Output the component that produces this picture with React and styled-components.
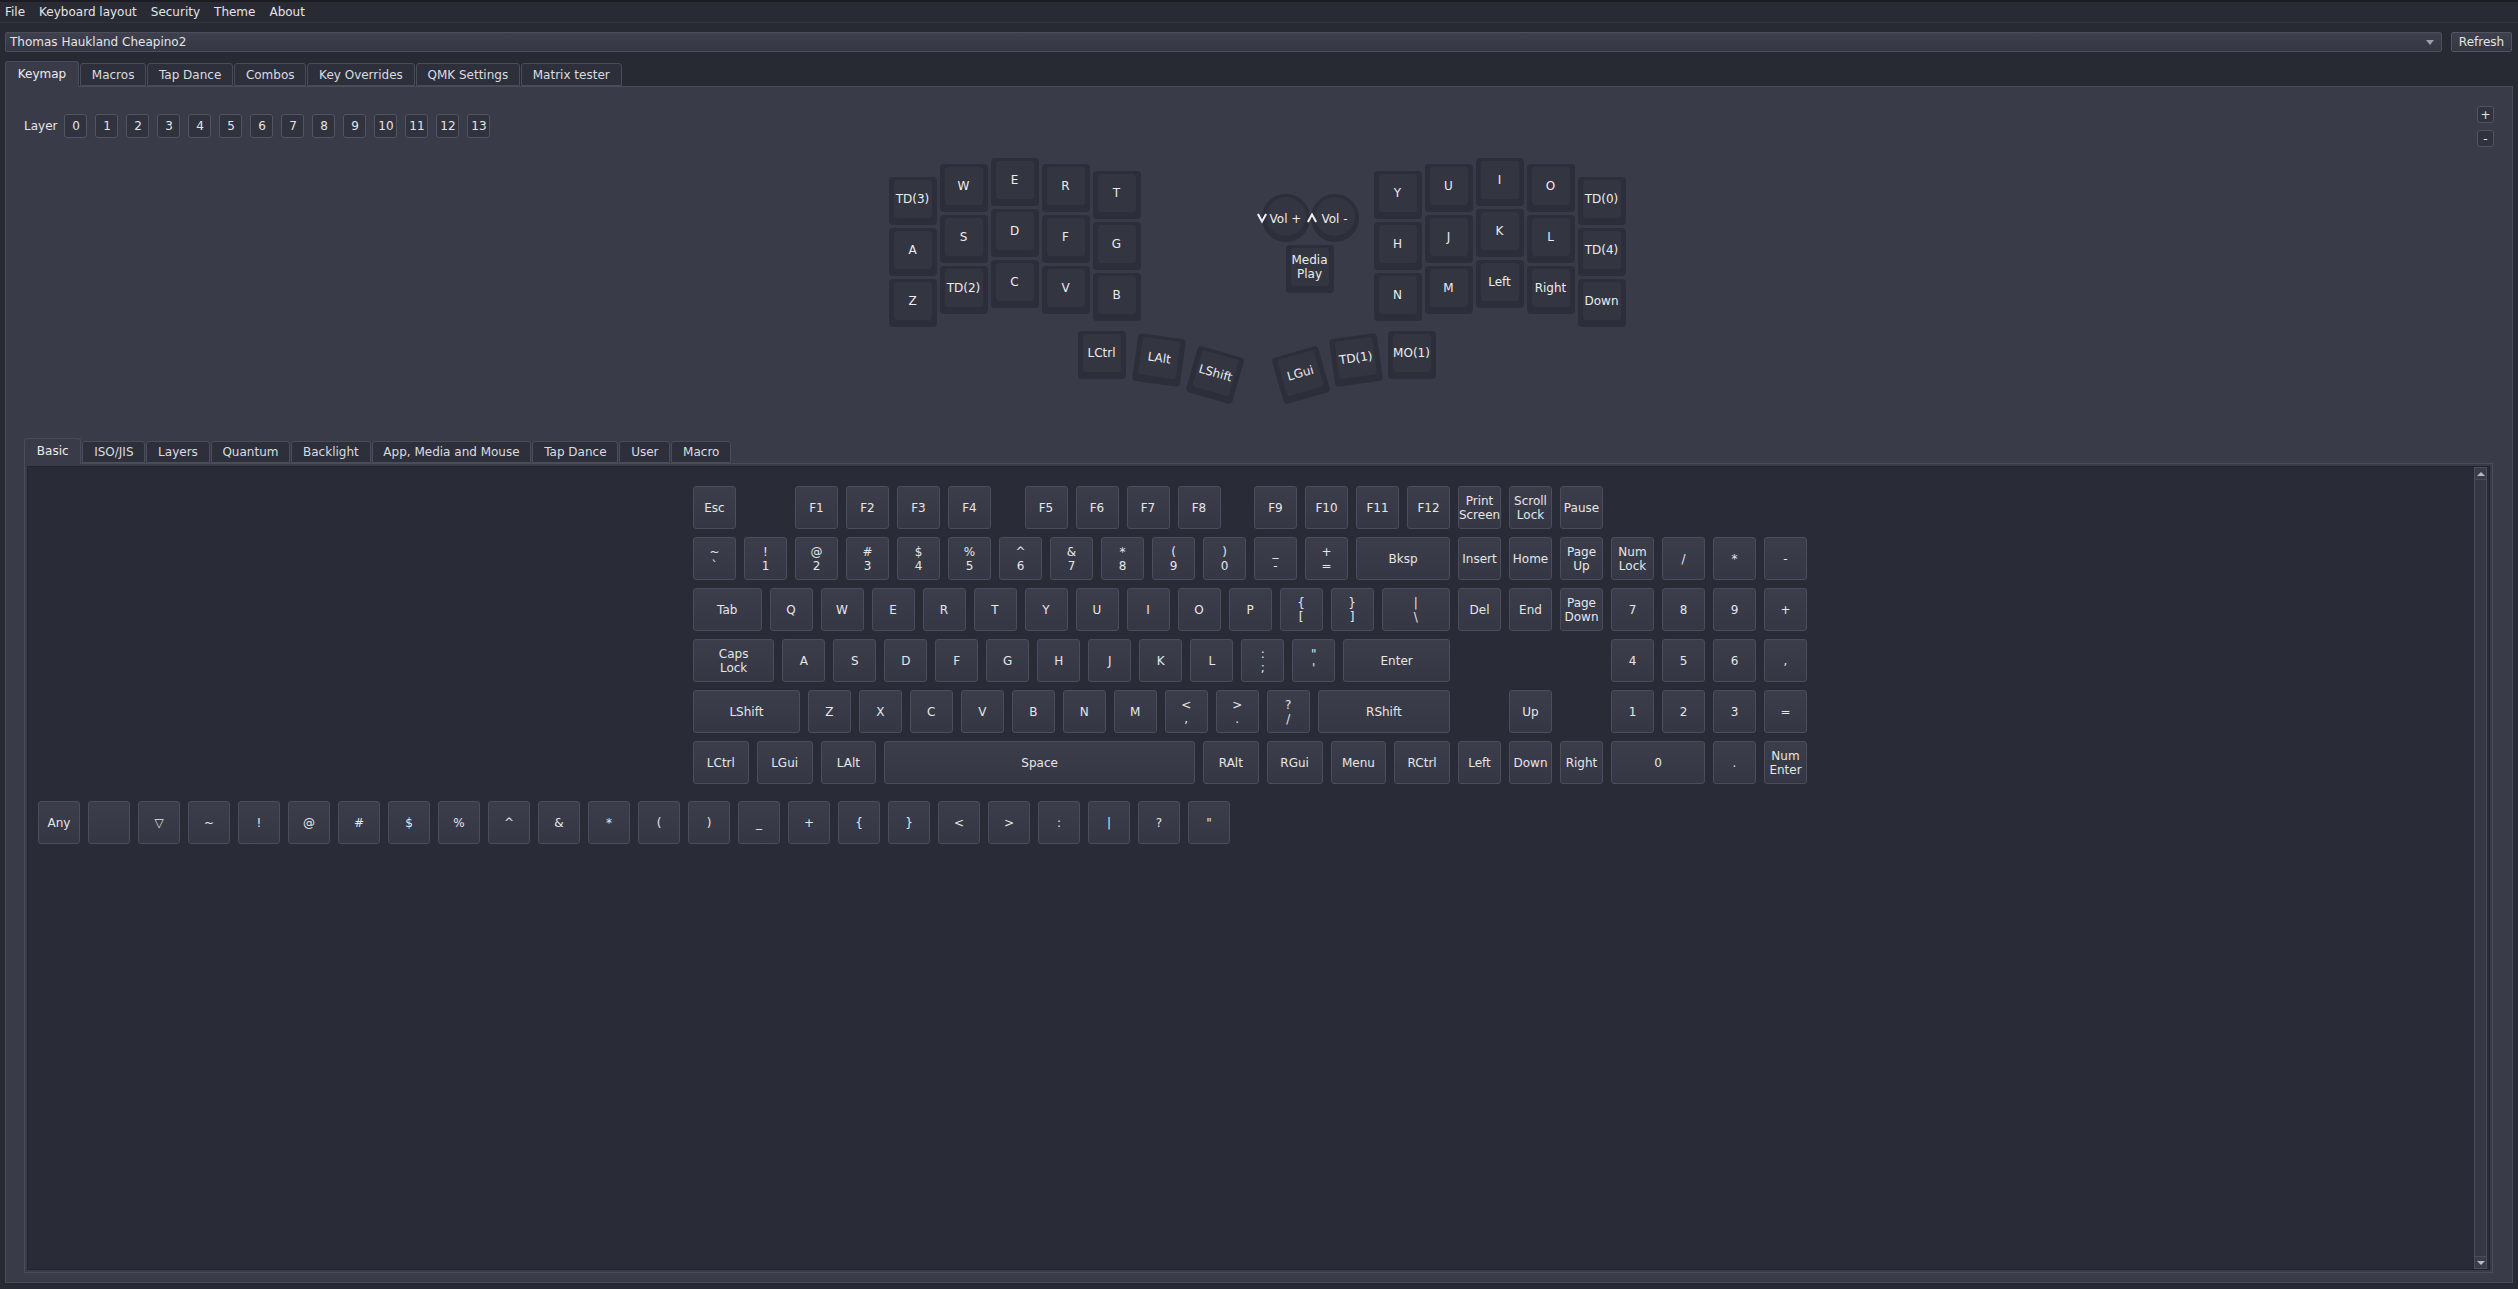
import React from "react";
import styled, { createGlobalStyle } from "styled-components";

const GlobalStyle = createGlobalStyle`
	html, body {
		margin: 0;
		padding: 0;
		background: #272933;
	}
	body {
		font-family: "DejaVu Sans", "Liberation Sans", sans-serif;
		font-size: 12px;
		color: #e4e4e6;
	}
	* {
		box-sizing: border-box;
	}
`;

const Window = styled.div`
	width: 2518px;
	height: 1289px;
	display: flex;
	flex-direction: column;
	overflow: hidden;
	border-top: 2px solid #1c1d22;
	background: #272933;
`;

const MenuBar = styled.div`
	height: 21px;
	display: flex;
	align-items: center;
	background: #282a34;
	border-bottom: 1px solid #30323c;
`;

const MenuItem = styled.span`
	padding: 0 7px;
	&:first-child {
		padding-left: 5px;
	}
`;

const DeviceRow = styled.div`
	margin-top: 9px;
	height: 20px;
	display: flex;
	gap: 9px;
	padding: 0 6px 0 5px;
`;

const Combo = styled.div`
	flex: 1;
	display: flex;
	align-items: center;
	justify-content: space-between;
	padding: 0 3px 0 4px;
	border: 1px solid #4c4e5b;
	border-radius: 2px;
	background: linear-gradient(#3e404d, #343643);
`;

const ComboArrow = styled.span`
	width: 0;
	height: 0;
	margin-right: 4px;
	border-left: 4px solid transparent;
	border-right: 4px solid transparent;
	border-top: 5px solid #9c9ea8;
`;

const PushButton = styled.div`
	width: 61px;
	display: flex;
	align-items: center;
	justify-content: center;
	border: 1px solid #52545f;
	border-radius: 2px;
	background: linear-gradient(#3e404d, #343643);
`;

const TabBar = styled.div`
	height: 25px;
	display: flex;
	align-items: flex-end;
	padding-left: ${(p) => p.$indent}px;
	margin-top: ${(p) => p.$top}px;
	position: relative;
	z-index: 1;
`;

const Tab = styled.div`
	height: ${(p) => (p.$active ? 26 : p.$low)}px;
	margin-bottom: ${(p) => (p.$active ? -1 : 0)}px;
	margin-right: 1px;
	padding: 0 ${(p) => (p.$active ? 11.8 : 10.8)}px;
	padding-bottom: ${(p) => (p.$active ? 2 : 0)}px;
	display: flex;
	align-items: center;
	white-space: nowrap;
	border: 1px solid #4a4c59;
	border-bottom: ${(p) => (p.$active ? "none" : "1px solid #4a4c59")};
	border-radius: 3px 3px 0 0;
	background: ${(p) => (p.$active ? "#393b48" : "#2d2f3b")};
	color: ${(p) => (p.$active ? "#ececee" : "#dcdce0")};
`;

const Pane = styled.div`
	flex: 1;
	min-height: 0;
	margin: 0 5px 6px 5px;
	display: flex;
	flex-direction: column;
	border: 1px solid #4a4c59;
	background: #393b48;
`;

const TopRow = styled.div`
	height: 60px;
	display: flex;
	justify-content: space-between;
	padding: 0 18px;
`;

const LayerGroup = styled.div`
	margin-top: 27px;
	height: 24px;
	display: flex;
	align-items: center;
	gap: 8px;
`;

const LayerLabel = styled.span`
	margin-right: -1px;
`;

const SmallButton = styled.div`
	width: ${(p) => p.$w}px;
	height: ${(p) => p.$h}px;
	display: flex;
	align-items: center;
	justify-content: center;
	border: 1px solid #52545f;
	border-radius: 3px;
	background: #30323e;
	color: #e4e4e6;
`;

const SideButtons = styled.div`
	margin-top: 19px;
	display: flex;
	flex-direction: column;
	gap: 7px;
`;

const KeymapCanvas = styled.div`
	position: relative;
	width: 737px;
	height: 250px;
	margin: 11px auto 0;
	left: -2px;
`;

const MapKey = styled.div`
	position: absolute;
	width: 48px;
	height: 48px;
	border-radius: 4px;
	background: #2c2e3a;
`;

const MapFace = styled.div`
	position: absolute;
	top: 3px;
	left: 5px;
	right: 5px;
	bottom: 7px;
	border-radius: 3px;
	background: #333541;
	display: flex;
	align-items: center;
	justify-content: center;
	text-align: center;
	line-height: 14px;
	white-space: pre-line;
	color: #ececee;
`;

const Encoder = styled.div`
	position: absolute;
	width: 48px;
	height: 48px;
	border-radius: 50%;
	background: #2c2e3a;
`;

const EncoderFace = styled.div`
	position: absolute;
	top: 3px;
	left: 4px;
	right: 4px;
	bottom: 6px;
	border-radius: 50%;
	background: #333541;
	display: flex;
	align-items: center;
	justify-content: center;
	padding-top: 4px;
	color: #ececee;
	white-space: nowrap;
`;

const Chevron = styled.svg`
	position: absolute;
	width: 10px;
	height: 12px;
	left: ${(p) => p.$x}px;
	top: ${(p) => p.$y}px;
	transform: rotate(${(p) => (p.$up ? 180 : 0)}deg);
`;

const SubTabs = styled.div`
	flex: 1;
	min-height: 0;
	margin: 30px 19px 9px 18px;
	display: flex;
	flex-direction: column;
`;

const SubPane = styled.div`
	flex: 1;
	min-height: 0;
	display: flex;
	padding: 2px;
	border: 1px solid #4a4c59;
	background: #393b48;
`;

const ScrollArea = styled.div`
	flex: 1;
	display: flex;
	background: #292b36;
	border: 1px solid #23242c;
`;

const ScrollContent = styled.div`
	flex: 1;
	display: flex;
	flex-direction: column;
	padding: 15px 0 0 10px;
`;

const Keyboard = styled.div`
	align-self: center;
	display: flex;
	flex-direction: column;
	margin-left: -12px;
`;

const KeyRow = styled.div`
	display: flex;
	height: 51px;
`;

const Key = styled.div`
	width: ${(p) => p.$w * 51 - 8}px;
	height: 43px;
	margin: 4px;
	flex-shrink: 0;
	display: flex;
	align-items: center;
	justify-content: center;
	text-align: center;
	line-height: 14px;
	white-space: pre-line;
	border: 1px solid #4b4d5a;
	border-radius: 3px;
	background: linear-gradient(#3b3d4a, #353744);
	color: #e6e6e8;
`;

const KeyGap = styled.div`
	width: ${(p) => p.$w * 51}px;
	flex-shrink: 0;
`;

const SymbolRow = styled.div`
	margin-top: 13px;
	display: flex;
	gap: 8px;
`;

const SymbolKey = styled(Key)`
	width: 42px;
	margin: 0;
`;

const ScrollBar = styled.div`
	width: 13px;
	margin: 0 2px 0 0;
	display: flex;
	flex-direction: column;
	border: 1px solid #4a4c59;
	background: #363845;
`;

const ScrollArrow = styled.div`
	height: 12px;
	display: flex;
	align-items: center;
	justify-content: center;
	background: #3a3c49;
	border-top: ${(p) => (p.$down ? "1px solid #4a4c59" : "none")};
	border-bottom: ${(p) => (p.$down ? "none" : "1px solid #4a4c59")};
	&::after {
		content: "";
		width: 0;
		height: 0;
		border-left: 4px solid transparent;
		border-right: 4px solid transparent;
		${(p) => (p.$down ? "border-top: 4px solid #b8bac2;" : "border-bottom: 4px solid #b8bac2;")}
	}
`;

const ScrollTrack = styled.div`
	flex: 1;
`;

const mainTabs = ["Keymap", "Macros", "Tap Dance", "Combos", "Key Overrides", "QMK Settings", "Matrix tester"];
const subTabs = ["Basic", "ISO/JIS", "Layers", "Quantum", "Backlight", "App, Media and Mouse", "Tap Dance", "User", "Macro"];

// split layout: column x, column y offset, labels top to bottom
const leftCols = [
	{ x: 0, y: 19, keys: ["TD(3)", "A", "Z"] },
	{ x: 51, y: 6, keys: ["W", "S", "TD(2)"] },
	{ x: 102, y: 0, keys: ["E", "D", "C"] },
	{ x: 153, y: 6, keys: ["R", "F", "V"] },
	{ x: 204, y: 13, keys: ["T", "G", "B"] },
];
const rightCols = [
	{ x: 485, y: 13, keys: ["Y", "H", "N"] },
	{ x: 536, y: 6, keys: ["U", "J", "M"] },
	{ x: 587, y: 0, keys: ["I", "K", "Left"] },
	{ x: 638, y: 6, keys: ["O", "L", "Right"] },
	{ x: 689, y: 19, keys: ["TD(0)", "TD(4)", "Down"] },
];
const thumbs = [
	{ l: "LCtrl", x: 189, y: 173, r: 0 },
	{ l: "LAlt", x: 246, y: 178, r: 8 },
	{ l: "LShift", x: 302, y: 193, r: 16 },
	{ l: "LGui", x: 388, y: 193, r: -16 },
	{ l: "TD(1)", x: 443, y: 178, r: -8 },
	{ l: "MO(1)", x: 499, y: 173, r: 0 },
];

const G = (w) => ({ gap: true, w });
const K = (l, w = 1) => ({ l, w });
const singles = (s) => s.split(" ").map((c) => K(c));

const basicRows = [
	[K("Esc"), G(1), ...singles("F1 F2 F3 F4"), G(0.5), ...singles("F5 F6 F7 F8"), G(0.5), ...singles("F9 F10 F11 F12"), K("Print\nScreen"), K("Scroll\nLock"), K("Pause")],
	[K("~\n`"), K("!\n1"), K("@\n2"), K("#\n3"), K("$\n4"), K("%\n5"), K("^\n6"), K("&\n7"), K("*\n8"), K("(\n9"), K(")\n0"), K("_\n-"), K("+\n="), K("Bksp", 2), K("Insert"), K("Home"), K("Page\nUp"), K("Num\nLock"), K("/"), K("*"), K("-")],
	[K("Tab", 1.5), ...singles("Q W E R T Y U I O P"), K("{\n["), K("}\n]"), K("|\n\\", 1.5), K("Del"), K("End"), K("Page\nDown"), K("7"), K("8"), K("9"), K("+")],
	[K("Caps\nLock", 1.75), ...singles("A S D F G H J K L"), K(":\n;"), K("\"\n'"), K("Enter", 2.25), G(3), K("4"), K("5"), K("6"), K(",")],
	[K("LShift", 2.25), ...singles("Z X C V B N M"), K("<\n,"), K(">\n."), K("?\n/"), K("RShift", 2.75), G(1), K("Up"), G(1), K("1"), K("2"), K("3"), K("=")],
	[K("LCtrl", 1.25), K("LGui", 1.25), K("LAlt", 1.25), K("Space", 6.25), K("RAlt", 1.25), K("RGui", 1.25), K("Menu", 1.25), K("RCtrl", 1.25), K("Left"), K("Down"), K("Right"), K("0", 2), K("."), K("Num\nEnter")],
];

const symbols = ["Any", "", "▽", "~", "!", "@", "#", "$", "%", "^", "&", "*", "(", ")", "_", "+", "{", "}", "<", ">", ":", "|", "?", "\""];

const ChevronIcon = ({ x, y, up }) => (
	<Chevron $x={x} $y={y} $up={up} viewBox="0 0 10 12">
		<path d="M0 2.5 L5 11.5 L10 2.5 L8.2 1.5 L5 7.5 L1.8 1.5 Z" fill="#f2f2f4" />
	</Chevron>
);

const SplitKeymap = () => (
	<KeymapCanvas>
		{[...leftCols, ...rightCols].map((col) =>
			col.keys.map((label, i) => (
				<MapKey key={label + col.x} style={{ left: col.x, top: col.y + i * 51 }}>
					<MapFace>{label}</MapFace>
				</MapKey>
			))
		)}
		<Encoder style={{ left: 373, top: 36 }}>
			<EncoderFace>Vol +</EncoderFace>
		</Encoder>
		<Encoder style={{ left: 422, top: 36 }}>
			<EncoderFace>Vol -</EncoderFace>
		</Encoder>
		<ChevronIcon x={368} y={54} />
		<ChevronIcon x={418} y={54} up />
		<MapKey style={{ left: 397, top: 87 }}>
			<MapFace>{"Media\nPlay"}</MapFace>
		</MapKey>
		{thumbs.map((t) => (
			<MapKey key={t.l} style={{ left: t.x, top: t.y, transform: `rotate(${t.r}deg)` }}>
				<MapFace>{t.l}</MapFace>
			</MapKey>
		))}
	</KeymapCanvas>
);

export default function App() {
	return (
		<>
			<GlobalStyle />
			<Window>
				<MenuBar>
					{["File", "Keyboard layout", "Security", "Theme", "About"].map((m) => (
						<MenuItem key={m}>{m}</MenuItem>
					))}
				</MenuBar>
				<DeviceRow>
					<Combo>
						<span>Thomas Haukland Cheapino2</span>
						<ComboArrow />
					</Combo>
					<PushButton>Refresh</PushButton>
				</DeviceRow>
				<TabBar $indent={5} $top={9}>
					{mainTabs.map((t, i) => (
						<Tab key={t} $active={i === 0} $low={23}>
							{t}
						</Tab>
					))}
				</TabBar>
				<Pane>
					<TopRow>
						<LayerGroup>
							<LayerLabel>Layer</LayerLabel>
							{Array.from({ length: 14 }, (_, i) => (
								<SmallButton key={i} $w={23} $h={24}>
									{i}
								</SmallButton>
							))}
						</LayerGroup>
						<SideButtons>
							<SmallButton $w={17} $h={17}>+</SmallButton>
							<SmallButton $w={17} $h={17}>-</SmallButton>
						</SideButtons>
					</TopRow>
					<SplitKeymap />
					<SubTabs>
						<TabBar $indent={0} $top={0}>
							{subTabs.map((t, i) => (
								<Tab key={t} $active={i === 0} $low={22}>
									{t}
								</Tab>
							))}
						</TabBar>
						<SubPane>
							<ScrollArea>
								<ScrollContent>
									<Keyboard>
										{basicRows.map((row, r) => (
											<KeyRow key={r}>
												{row.map((k, i) =>
													k.gap ? <KeyGap key={i} $w={k.w} /> : <Key key={i} $w={k.w}>{k.l}</Key>
												)}
											</KeyRow>
										))}
									</Keyboard>
									<SymbolRow>
										{symbols.map((s, i) => (
											<SymbolKey key={i} $w={1}>
												{s}
											</SymbolKey>
										))}
									</SymbolRow>
								</ScrollContent>
								<ScrollBar>
									<ScrollArrow />
									<ScrollTrack />
									<ScrollArrow $down />
								</ScrollBar>
							</ScrollArea>
						</SubPane>
					</SubTabs>
				</Pane>
			</Window>
		</>
	);
}
